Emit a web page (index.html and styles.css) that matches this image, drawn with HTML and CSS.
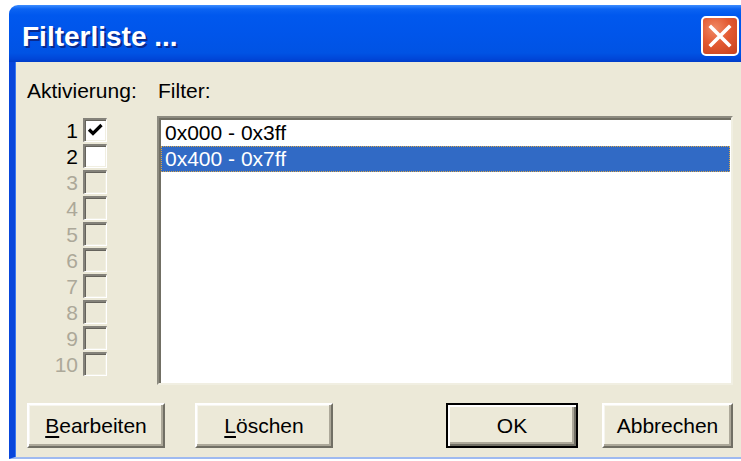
FILE: index.html
```html
<!DOCTYPE html>
<html lang="de">
<head>
<meta charset="utf-8">
<title>Filterliste</title>
<link rel="stylesheet" href="styles.css">
</head>
<body>
<div class="window">
  <div class="titlebar">
    <span class="title">Filterliste ...</span>
    <button class="close" aria-label="Schließen">
      <svg width="24" height="24" viewBox="0 0 24 24"><path d="M3 3 L21 21 M21 3 L3 21" stroke="#fff" stroke-width="3.6" stroke-linecap="square" fill="none"/></svg>
    </button>
  </div>
  <div class="client">
    <div class="labels">
      <span class="lbl-act">Aktivierung:</span>
      <span class="lbl-filter">Filter:</span>
    </div>
    <div class="main">
      <ul class="checks">
        <li><span class="num">1</span><span class="cb"><svg width="19" height="19" viewBox="0 0 19 19"><path d="M3 8.5 L7 12.5 L15.5 4" stroke="#000" stroke-width="3.2" fill="none"/></svg></span></li>
        <li><span class="num">2</span><span class="cb"></span></li>
        <li class="off"><span class="num">3</span><span class="cb"></span></li>
        <li class="off"><span class="num">4</span><span class="cb"></span></li>
        <li class="off"><span class="num">5</span><span class="cb"></span></li>
        <li class="off"><span class="num">6</span><span class="cb"></span></li>
        <li class="off"><span class="num">7</span><span class="cb"></span></li>
        <li class="off"><span class="num">8</span><span class="cb"></span></li>
        <li class="off"><span class="num">9</span><span class="cb"></span></li>
        <li class="off"><span class="num">10</span><span class="cb"></span></li>
      </ul>
      <div class="listbox">
        <div class="item">0x000 - 0x3ff</div>
        <div class="item selected">0x400 - 0x7ff</div>
      </div>
    </div>
    <div class="buttons">
      <button class="btn btn-edit"><u>B</u>earbeiten</button>
      <button class="btn btn-del"><u>L</u>öschen</button>
      <button class="btn btn-ok default">OK</button>
      <button class="btn btn-cancel">Abbrechen</button>
    </div>
  </div>
</div>
</body>
</html>
```
FILE: styles.css
```css
html, body {
  margin: 0;
  padding: 0;
  background: #fff;
  overflow: hidden;
}

body {
  width: 741px;
  height: 461px;
}

.window {
  margin: 5px 0 0 9px;
  width: 745px;
  font-family: "Liberation Sans", Arial, sans-serif;
}

/* Luna title bar */
.titlebar {
  height: 57px;
  box-sizing: border-box;
  border-radius: 9px 9px 0 0;
  background: linear-gradient(to bottom,
    #3d8dff 0px, #0b63f2 4px, #0058ee 10px, #0055ea 30px,
    #0053e4 48px, #0046d8 54px, #003cc8 57px);
  display: flex;
  align-items: center;
  padding-left: 13px;
  position: relative;
}

.title {
  color: #fff;
  font-weight: bold;
  font-size: 28px;
  line-height: 32px;
  margin-top: 6px;
  text-shadow: 2px 2px 0 #0a2a8c;
}

.close {
  position: absolute;
  left: 692px;
  top: 11px;
  width: 38px;
  height: 40px;
  padding: 0;
  box-sizing: border-box;
  border: 2px solid #fff;
  border-radius: 5px;
  background: radial-gradient(circle at 35% 30%, #f08a66 0%, #e35a32 45%, #c7401c 100%);
  display: flex;
  align-items: center;
  justify-content: center;
}

.client {
  height: 397px;
  box-sizing: border-box;
  background: #ece9d8;
  border-left: 6px solid #0846db;
  border-bottom: 2px solid #9fbaf0;
  box-shadow: inset 1px 0 0 #3a78f0;
  padding: 17px 0 0 12px;
  font-size: 21px;
  color: #000;
}

.labels {
  display: flex;
  line-height: 24px;
  height: 24px;
}

.lbl-act {
  width: 131px;
}

.main {
  display: flex;
  margin-top: 13px;
}

.checks {
  list-style: none;
  margin: 0;
  padding: 2px 0 0 0;
  width: 130px;
}

.checks li {
  display: flex;
  align-items: center;
  height: 26px;
}

.num {
  width: 51px;
  text-align: right;
  line-height: 22px;
  margin-right: 5px;
}

.cb {
  width: 24px;
  height: 24px;
  box-sizing: border-box;
  background: #fff;
  border-style: solid;
  border-width: 2px 1px 1px 2px;
  border-color: #84827a #fff #fff #84827a;
  box-shadow: inset 1px 1px 0 #65635c, inset -1px -1px 0 #f1efe2;
  display: flex;
  align-items: center;
  justify-content: center;
  margin-top: -3px;
}

.checks li.off .num {
  color: #aca899;
}

.checks li.off .cb {
  background: #ece9d8;
}

.listbox {
  width: 576px;
  height: 269px;
  box-sizing: border-box;
  background: #fff;
  border-style: solid;
  border-width: 2px 2px 2px 2px;
  border-color: #8d8b80 #f1efe2 #f1efe2 #8d8b80;
  box-shadow: inset 2px 2px 0 #716f64, inset -1px -1px 0 #fff;
  padding: 2px 1px 0 2px;
}

.item {
  height: 26px;
  line-height: 26px;
  padding-left: 4px;
  box-sizing: border-box;
  white-space: nowrap;
}

.item.selected {
  background: #316ac5;
  color: #fff;
  border: 1px dotted #d7a54a;
  padding-left: 3px;
  line-height: 24px;
}

.buttons {
  display: flex;
  margin-top: 18px;
}

.btn {
  height: 45px;
  box-sizing: border-box;
  padding: 0;
  font-family: "Liberation Sans", Arial, sans-serif;
  font-size: 21px;
  color: #000;
  background: #ece9d8;
  border-style: solid;
  border-width: 2px;
  border-color: #fff #716f64 #716f64 #fff;
  box-shadow: inset -2px -2px 0 #aca899, inset 1px 1px 0 #f6f5ee;
}

.btn u {
  text-decoration-thickness: 2px;
  text-underline-offset: 3px;
}

.btn-edit { width: 138px; }
.btn-del { width: 138px; margin-left: 30px; }
.btn-ok { width: 132px; margin-left: 113px; }
.btn-cancel { width: 131px; margin-left: 24px; }

.btn.default {
  border: 2px solid #000;
  box-shadow: inset 2px 2px 0 #fff, inset -2px -2px 0 #716f64, inset -4px -4px 0 #aca899;
}
```
